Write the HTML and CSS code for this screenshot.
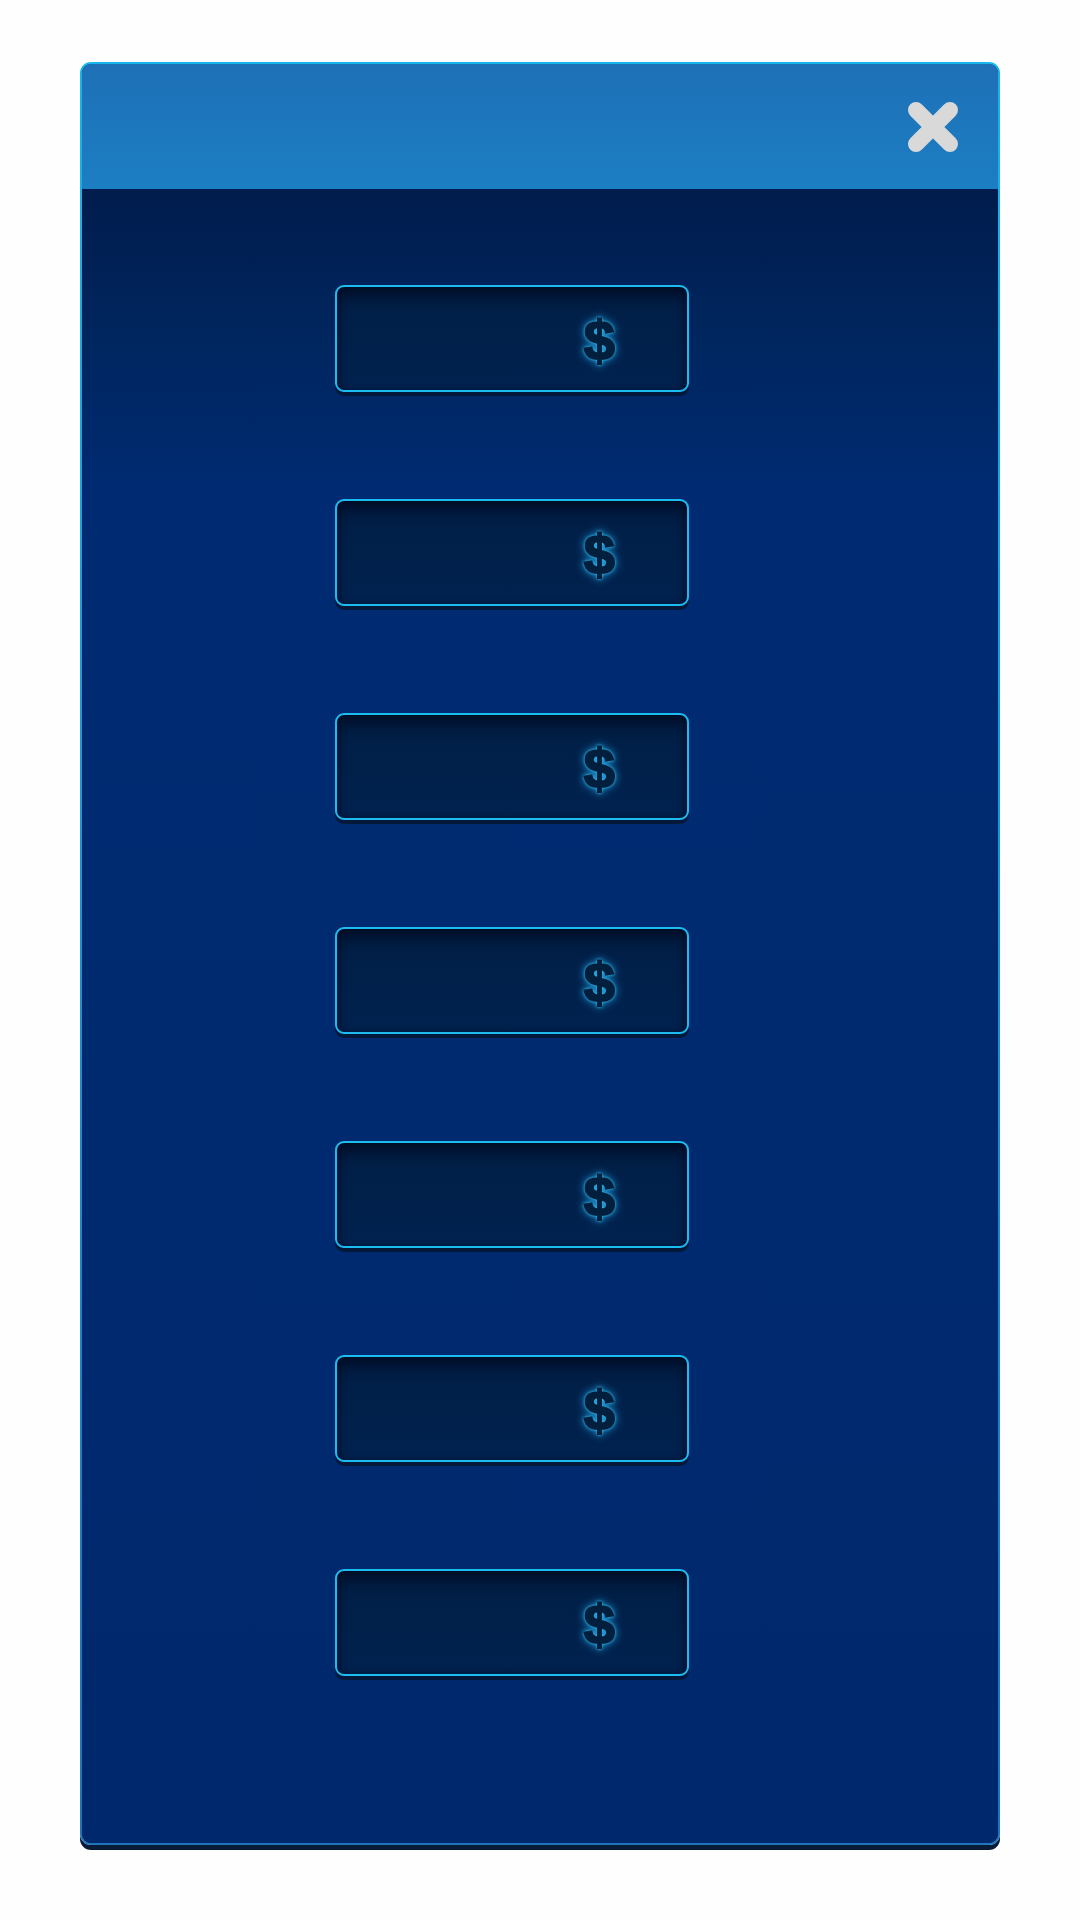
FILE: index.html
```html
<!DOCTYPE html>
<html>
<head>
<meta charset="utf-8">
<link rel="stylesheet" href="styles.css">
</head>
<body>
<div class="panel">
  <div class="panel-inner">
    <div class="header">
      <button class="close" aria-label="Close">
        <svg width="52" height="52" viewBox="0 0 52 52"><path d="M9 9 L43 43 M43 9 L9 43" stroke="#d9d9d9" stroke-width="16" stroke-linecap="round" fill="none"/></svg>
      </button>
    </div>
    <div class="body">
      <div class="field"><span class="cur">$</span></div>
      <div class="field"><span class="cur">$</span></div>
      <div class="field"><span class="cur">$</span></div>
      <div class="field"><span class="cur">$</span></div>
      <div class="field"><span class="cur">$</span></div>
      <div class="field"><span class="cur">$</span></div>
      <div class="field"><span class="cur">$</span></div>
    </div>
  </div>
</div>
</body>
</html>
```
FILE: styles.css
```css
html, body {
  margin: 0;
  padding: 0;
  background: #fefefe;
}
body {
  width: 1080px;
  height: 1920px;
  font-family: "Liberation Sans", Arial, sans-serif;
}
.panel {
  margin: 62px 0 0 80px;
  width: 920px;
  padding: 2px;
  box-sizing: border-box;
  border-radius: 11px;
  background: linear-gradient(to bottom, #17b6ea 0%, #1a98d6 40%, #1f74ba 100%);
  box-shadow: 0 5px 0 #0a1b38;
}
.panel-inner {
  border-radius: 9px;
  overflow: hidden;
  background: #00296f;
}
.header {
  height: 125px;
  background: linear-gradient(to bottom, #1e70b6, #1c7ec3);
  display: flex;
  justify-content: flex-end;
  align-items: center;
}
.close {
  width: 52px;
  height: 52px;
  margin-right: 39px;
  padding: 0;
  border: 0;
  background: none;
  display: flex;
}
.body {
  height: 1654px;
  box-sizing: border-box;
  padding: 96px 0 0 253px;
  display: flex;
  flex-direction: column;
  gap: 107px;
  background: linear-gradient(to bottom, #011c4d 0px, #00265f 150px, #002b72 300px, #002a70 900px, #00286d 1654px);
}
.field {
  width: 354px;
  height: 107px;
  box-sizing: border-box;
  border: 2px solid #1cbcf0;
  border-radius: 9px;
  background: linear-gradient(to bottom, #011a3d 0%, #012049 30%, #01224f 100%);
  box-shadow: inset 0 8px 12px rgba(0, 8, 25, 0.55), inset 0 0 6px rgba(0, 10, 30, 0.5), 0 4px 0 #04183a;
  display: flex;
  align-items: center;
  justify-content: flex-end;
  padding-right: 72px;
}
.cur {
  margin-top: 4px;
  font-weight: bold;
  font-size: 56px;
  line-height: 1;
  color: #02203d;
  -webkit-text-stroke: 2px #02203d;
  filter: drop-shadow(0 0 1.5px #36c2f7) drop-shadow(0 0 4px rgba(30, 165, 230, 0.85));
}
```
